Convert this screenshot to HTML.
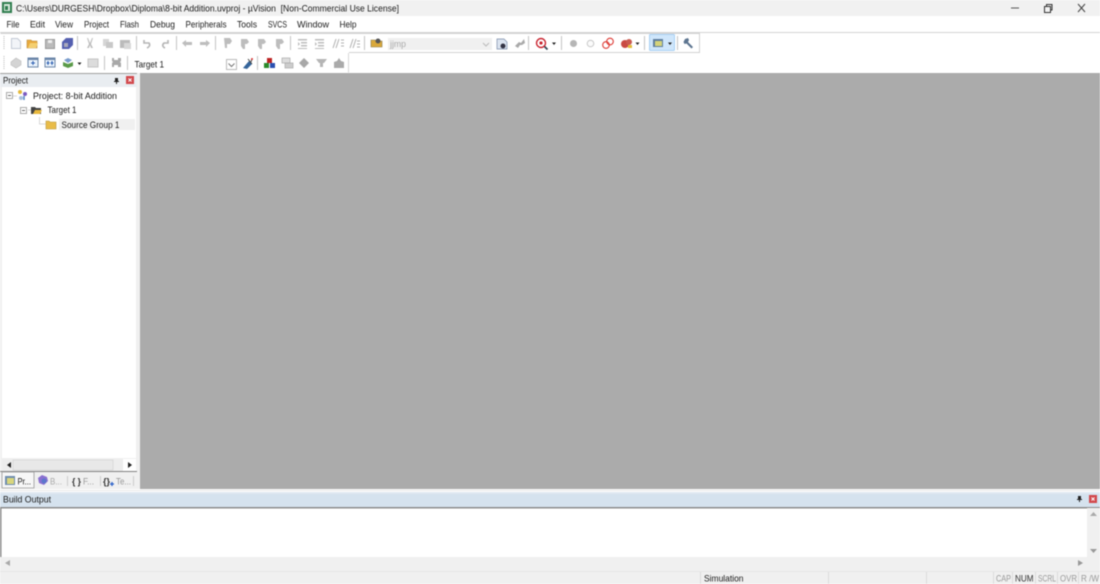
<!DOCTYPE html>
<html><head><meta charset="utf-8"><style>
html,body{margin:0;padding:0;width:1100px;height:584px;overflow:hidden;background:#fff}
svg{display:block;filter:blur(.5px)}
text{font-family:"Liberation Sans",sans-serif;font-size:9.5px;fill:#1a1a1a}
</style></head><body>
<svg width="1100" height="584" viewBox="0 0 1100 584" xmlns="http://www.w3.org/2000/svg">
<rect width="1100" height="584" fill="#fff"/>
<!-- title bar -->
<rect width="1100" height="16" fill="#f1f1f1"/>
<rect x="2" y="2" width="10" height="11" fill="#2f7d4f"/><rect x="4" y="4" width="6" height="7" fill="#d8e8dc"/><rect x="5" y="6" width="3" height="4" fill="#2f7d4f"/>
<text x="16" y="11.500" textLength="383" lengthAdjust="spacingAndGlyphs" xml:space="preserve">C:\Users\DURGESH\Dropbox\Diploma\8-bit Addition.uvproj - µVision  [Non-Commercial Use License]</text>
<path d="M1011 8h8" stroke="#555" stroke-width="1"/>
<rect x="1044.500" y="6.500" width="6" height="6" fill="none" stroke="#333"/><path d="M1046.500 6V4.500h5.500V10h-1.500" fill="none" stroke="#333"/>
<path d="M1078 4l7 8M1085 4l-7 8" stroke="#444" stroke-width="1"/>
<!-- menu -->
<text x="6.500" y="27.500" textLength="13" lengthAdjust="spacingAndGlyphs">File</text>
<text x="30" y="27.500" textLength="15" lengthAdjust="spacingAndGlyphs">Edit</text>
<text x="55" y="27.500" textLength="18" lengthAdjust="spacingAndGlyphs">View</text>
<text x="84" y="27.500" textLength="25" lengthAdjust="spacingAndGlyphs">Project</text>
<text x="120" y="27.500" textLength="19" lengthAdjust="spacingAndGlyphs">Flash</text>
<text x="150" y="27.500" textLength="25" lengthAdjust="spacingAndGlyphs">Debug</text>
<text x="185.500" y="27.500" textLength="41" lengthAdjust="spacingAndGlyphs">Peripherals</text>
<text x="237" y="27.500" textLength="20" lengthAdjust="spacingAndGlyphs">Tools</text>
<text x="268" y="27.500" textLength="19" lengthAdjust="spacingAndGlyphs">SVCS</text>
<text x="297" y="27.500" textLength="32" lengthAdjust="spacingAndGlyphs">Window</text>
<text x="339.500" y="27.500" textLength="17" lengthAdjust="spacingAndGlyphs">Help</text>
<rect y="32" width="1100" height="1" fill="#d4d4d4"/>
<!-- toolbars -->
<path d="M0.500 33.500H699.500V52.500H349" fill="#fff" stroke="#d2d2d2"/>
<rect x="0" y="53" width="349" height="20" fill="#fff"/>
<path d="M348.500 53V72.500" stroke="#d8d8d8"/>
<path d="M4 36v14M4 56v14" stroke="#bbb" stroke-dasharray="1 1"/>
<g fill="#c4c4c4">
<rect x="77" y="36" width="1" height="14"/><rect x="136" y="36" width="1" height="14"/><rect x="176" y="36" width="1" height="14"/><rect x="215" y="36" width="1" height="14"/><rect x="290" y="36" width="1" height="14"/><rect x="364" y="36" width="1" height="14"/><rect x="528" y="36" width="1" height="14"/><rect x="561" y="36" width="1" height="14"/><rect x="644" y="36" width="1" height="14"/><rect x="677" y="36" width="1" height="14"/>
<rect x="104" y="56" width="1" height="14"/><rect x="127" y="56" width="1" height="14"/><rect x="257" y="56" width="1" height="14"/>
</g>
<!-- row 1 icons -->
<path d="M11.500 38.500h6l3 3v7h-9z" fill="#f2f4f8" stroke="#c5cbd6"/>
<path d="M27 48v-8h4l1 1h5v7z" fill="#e8a93c" stroke="#b98a3a" stroke-width=".6"/><path d="M28 48l2-5h8l-2 5z" fill="#f4cf70"/>
<rect x="45.500" y="39.500" width="9" height="9" fill="#bbb" stroke="#999"/><rect x="48" y="40" width="4" height="3" fill="#eee"/>
<path d="M62 42l4-4h7v7l-4 4h-7z" fill="#5560b0"/><rect x="64" y="43" width="4" height="4" fill="#aab"/>
<path d="M88 38l2 5 2-5 1 0-2 6 2 4h-2l-1-3-1 3h-2l2-4-2-6z" fill="#bdbdbd"/>
<rect x="103" y="39" width="6" height="7" fill="#d6d6d6"/><rect x="106" y="42" width="7" height="6" fill="#c8c8c8"/>
<rect x="120" y="40" width="10" height="8" fill="#bbb"/><rect x="124" y="43" width="7" height="6" fill="#d8d8d8"/>
<g fill="none" stroke="#b5b5b5" stroke-width="1.600">
<path d="M144 40v3h5q2 3-2 5"/>
<path d="M168 40v3h-4q-3 3 1 5"/>
</g>
<g fill="#bdbdbd">
<path d="M182 43l4-3v2h6v3h-6v2z"/><path d="M210 43l-4-3v2h-6v3h6v2z"/>
<path d="M224 38h6l2 3-2 3h-3v4h-2z"/><path d="M241 39h6l2 3-2 2h-2v5h-2l-2-3z"/><path d="M258 39h6l2 3-2 2h-2v5h-2l-2-3z"/><path d="M276 39h6l2 3-2 2h-2v5h-2l-2-3z"/>
<path d="M298 39h9v1.500h-9zM301 42h6v1.500h-6zM301 45h6v1.500h-6zM298 48h9v1h-9zM298 42l2 2-2 2z"/>
<path d="M315 39h9v1.500h-9zM318 42h6v1.500h-6zM318 45h6v1.500h-6zM315 48h9v1h-9zM315 42l2 2-2 2z"/>
</g>
<g fill="none" stroke="#b0b0b0" stroke-width="1"><path d="M333 48l3-9M336 48l3-9M341 40h3M341 43h3M341 46h3"/><path d="M350 48l3-9M353 48l3-9M357 41h3M357 44h3M357 47h3"/></g>
<path d="M371 47v-7h4l1 1h6v6z" fill="#d9a83a" stroke="#8a7a4a" stroke-width=".6"/><circle cx="378" cy="41" r="2.500" fill="#555"/>
<rect x="388" y="38" width="104" height="12" fill="#f0f0f0"/>
<text x="390" y="47" textLength="16" lengthAdjust="spacingAndGlyphs" style="fill:#aaa">jjmp</text>
<path d="M483 43l3 3 3-3" fill="none" stroke="#bbb"/>
<path d="M497 39h7l3 3v7h-10z" fill="#dce4f0" stroke="#7a8ca8" stroke-width=".7"/><circle cx="503" cy="46" r="2.500" fill="#334"/>
<path d="M515 46l4-4 2 1 3-4 1 4-3 2-2 0-2 3z" fill="#aaa"/>
<circle cx="541" cy="43" r="4.500" fill="#fff" stroke="#c9232f" stroke-width="1.400"/><circle cx="541" cy="43" r="1.600" fill="#c9232f"/><path d="M544.500 46.500l3 3" stroke="#345" stroke-width="1.800"/>
<path d="M552 42.500h4l-2 2.500z" fill="#222"/>
<circle cx="573.500" cy="43.500" r="3.500" fill="#b5b5b5"/>
<circle cx="590.500" cy="43.500" r="3.300" fill="#fbfbfb" stroke="#c8c8c8"/>
<circle cx="606" cy="45" r="3.300" fill="none" stroke="#dd3b35" stroke-width="1.100"/><circle cx="610" cy="41.500" r="3.300" fill="none" stroke="#dd3b35" stroke-width="1.100"/>
<circle cx="625" cy="44" r="4" fill="#c94a43"/><circle cx="629" cy="42" r="3" fill="#c95a50"/><path d="M628 45h4v3h-4z" fill="#e3bd3a"/>
<path d="M635.500 42.500h4l-2 2.500z" fill="#222"/>
<rect x="649.500" y="34.500" width="25" height="16" rx="1" fill="#cfe6fb" stroke="#a9d1f5"/>
<rect x="653" y="39" width="10" height="8" fill="#5f7f9f"/><rect x="655" y="41" width="7" height="5" fill="#d5d37a"/>
<path d="M668 42.500h4l-2 2.500z" fill="#222"/>
<path d="M685 39l3-1 1 2-1 2 5 5-1.500 1.500-5-5-2 .5-1-2z" fill="#5d7590"/>
<!-- row 2 icons -->
<path d="M11 62l5-4 5 3v4l-5 3-5-3z" fill="#d4d4d4" stroke="#bbb" stroke-width=".6"/>
<rect x="28" y="58" width="10" height="9" fill="#eaf2fb" stroke="#6b86a8"/><rect x="28" y="58" width="10" height="2" fill="#6b86a8"/><path d="M33 61v4M31 63h4" stroke="#2a5db0"/>
<rect x="45" y="58" width="10" height="9" fill="#eaf2fb" stroke="#6b86a8"/><rect x="45" y="58" width="10" height="2" fill="#6b86a8"/><path d="M48 61v4M46.500 63h3M52 61v4M50.500 63h3" stroke="#2a5db0"/>
<path d="M63 62l5 2 5-2v4l-5 2-5-2z" fill="#5a9a48"/><path d="M64 60l4-2 4 2-4 3z" fill="#7a9ccc"/>
<path d="M77.500 62.500h4l-2 2.500z" fill="#222"/>
<rect x="88" y="59" width="10" height="8" fill="#dcdcdc" stroke="#c4c4c4"/>
<path d="M112 58h2v2h4v-2h3v3l-1 1 1 1v4h-3v-2h-4v2h-2v-4l1-1-1-1z" fill="#a8a8a8"/>
<!-- target combo -->
<text x="134.500" y="67.500" textLength="29.500" lengthAdjust="spacingAndGlyphs">Target 1</text>
<rect x="226.500" y="59.500" width="10" height="10" fill="#fff" stroke="#bbb"/><path d="M228.500 63.500l3 3 3-3" fill="none" stroke="#777"/>
<path d="M243 68l6-7 3 3-5 5z" fill="#34649a"/><path d="M248 59l4 5M252 59l-1 3" stroke="#444"/><circle cx="252" cy="59" r="1" fill="#d33"/>
<rect x="267" y="58" width="5" height="5" fill="#b22"/><rect x="264" y="63" width="5" height="5" fill="#2a8a2a"/><rect x="270" y="63" width="5" height="5" fill="#2a50b0"/>
<rect x="282" y="58" width="8" height="5" fill="#ddd" stroke="#aaa" stroke-width=".7"/><rect x="285" y="63" width="8" height="5" fill="#ccc" stroke="#aaa" stroke-width=".7"/>
<path d="M304 58l5 5-5 5-5-5z" fill="#a8a8a8"/>
<path d="M316 59h11l-3 4h-1v4h-3v-4h-1z" fill="#b5b5b5"/>
<path d="M334 68v-6l3-1 2-3 2 3 3 1v6z" fill="#aaa"/>
<rect y="73" width="1100" height="1" fill="#a0a0a0"/>
<!-- main -->
<rect x="137" y="73" width="3" height="416" fill="#f0f0f0"/>
<rect x="140" y="73" width="960" height="417" fill="#ababab"/>
<!-- project panel -->
<rect x="0" y="74" width="137" height="415" fill="#f0f0f0"/>
<rect x="0" y="74" width="137" height="13" fill="#e9edf1"/>
<text x="3" y="83.500" textLength="25" lengthAdjust="spacingAndGlyphs">Project</text>
<path d="M115 78h3v3h1v1h-2v2h-1v-2h-2v-1h1z" fill="#222"/>
<rect x="126" y="76" width="8" height="8" fill="#d2484c"/><path d="M128.500 78.500l3 3M131.500 78.500l-3 3" stroke="#fff"/>
<rect x="2" y="87" width="134" height="371" fill="#fff"/>
<path d="M13 96h4M28 110h3M39.500 117v7h6" fill="none" stroke="#d8d8d8"/>
<rect x="6.500" y="92.500" width="6" height="6" fill="#fff" stroke="#aaa"/><path d="M8 95.500h3" stroke="#666"/>
<circle cx="20" cy="92" r="2" fill="#e5b93a"/><circle cx="25" cy="94" r="2" fill="#7a5bc0"/><circle cx="21" cy="98" r="2" fill="#a9c0dc"/><path d="M24 96v4" stroke="#4a80c0" stroke-width="1.400"/>
<text x="33" y="99" textLength="84" lengthAdjust="spacingAndGlyphs">Project: 8-bit Addition</text>
<rect x="20.500" y="107.500" width="6" height="6" fill="#fff" stroke="#aaa"/><path d="M22 110.500h3" stroke="#666"/>
<path d="M31 114v-7h4l1 1h5v6z" fill="#444"/><path d="M33 114l2-4h7l-2 4z" fill="#e9b93e"/>
<text x="47.500" y="113.200" textLength="29" lengthAdjust="spacingAndGlyphs">Target 1</text>
<rect x="59" y="119" width="76" height="11" fill="#f0f0f0"/>
<path d="M46 129v-8h3l1 1h6v7z" fill="#e9bc48" stroke="#b8963c" stroke-width=".6"/>
<text x="61.500" y="127.800" textLength="58" lengthAdjust="spacingAndGlyphs">Source Group 1</text>
<!-- scrollbar -->
<rect x="2" y="459" width="134" height="12" fill="#ededed"/>
<rect x="13" y="460" width="100" height="10" fill="#e8e8e8" stroke="#cfcfcf" stroke-width=".6"/>
<rect x="123" y="459" width="13" height="12" fill="#fff"/>
<path d="M11 462v6l-4-3z" fill="#222"/><path d="M128 462v6l4-3z" fill="#222"/>
<rect y="471" width="137" height="1" fill="#808080"/>
<!-- tabs -->
<path d="M2 472h32v16H2z" fill="#f7f7f7" stroke="#999" stroke-width=".8"/>
<rect x="5" y="476" width="10" height="9" fill="#6f8dae"/><rect x="7" y="478" width="7" height="6" fill="#d9d67c"/>
<text x="17.500" y="484.500" textLength="13.500" lengthAdjust="spacingAndGlyphs">Pr...</text>
<path d="M42 475l5 2 1 4-4 4-5-2-1-5z" fill="#8a70d0"/><circle cx="44" cy="481" r="2.500" fill="#5b77cc"/>
<text x="50" y="484.500" textLength="12" lengthAdjust="spacingAndGlyphs" style="fill:#aaa">B...</text>
<rect x="67" y="476" width="1" height="10" fill="#ccc"/>
<text x="72" y="484.500" textLength="9" lengthAdjust="spacingAndGlyphs" style="fill:#333;font-weight:bold">{ }</text>
<text x="83" y="484.500" textLength="11" lengthAdjust="spacingAndGlyphs" style="fill:#999">F...</text>
<rect x="100" y="476" width="1" height="10" fill="#ccc"/>
<text x="103" y="484.500" textLength="7" lengthAdjust="spacingAndGlyphs" style="fill:#333;font-weight:bold">{}</text>
<path d="M110 484h4M112 482v4" stroke="#2a60c8" stroke-width="1.300"/>
<text x="116" y="484.500" textLength="15" lengthAdjust="spacingAndGlyphs" style="fill:#999">Te...</text>
<rect x="133" y="476" width="1" height="10" fill="#ccc"/>
<!-- build output -->
<rect y="489" width="1100" height="3" fill="#fff"/>
<rect y="490" width="1100" height="1" fill="#e8e8e8"/>
<rect y="492" width="1100" height="15" fill="#d5e2ee"/>
<rect y="492" width="1100" height="2" fill="#dfe8f1"/>
<text x="3" y="502.500" textLength="48" lengthAdjust="spacingAndGlyphs">Build Output</text>
<path d="M1078 496h3v3h1v1h-2v2h-1v-2h-2v-1h1z" fill="#222"/>
<rect x="1089" y="495" width="8" height="8" fill="#d2484c"/><path d="M1091.500 497.500l3 3M1094.500 497.500l-3 3" stroke="#fff"/>
<rect y="507" width="1100" height="1.500" fill="#8c8c8c"/>
<rect x="0" y="507" width="1.500" height="50" fill="#8c8c8c"/>
<rect x="1.500" y="508.500" width="1085" height="49" fill="#fff"/>
<rect x="1087" y="508" width="13" height="49" fill="#f0f0f0"/>
<path d="M1090 516h7l-3.500-4z" fill="#aaa"/><path d="M1090 549h7l-3.500 4z" fill="#999"/>
<rect y="557" width="1100" height="14" fill="#f0f0f0"/>
<path d="M10 560v6l-5-3z" fill="#aaa"/><path d="M1078 560v6l5-3z" fill="#999"/>
<!-- status -->
<rect y="571" width="1100" height="13" fill="#f0f0f0"/>
<rect y="571" width="1100" height="1" fill="#e6e6e6"/>
<g fill="#dcdcdc"><rect x="700" y="572" width="1" height="12"/><rect x="828" y="572" width="1" height="12"/><rect x="926" y="572" width="1" height="12"/><rect x="993" y="572" width="1" height="12"/><rect x="1012" y="572" width="1" height="12"/><rect x="1035" y="572" width="1" height="12"/><rect x="1057" y="572" width="1" height="12"/><rect x="1078" y="572" width="1" height="12"/></g>
<text x="704" y="581.500" textLength="39.500" lengthAdjust="spacingAndGlyphs">Simulation</text>
<text x="996" y="581.500" textLength="15" lengthAdjust="spacingAndGlyphs" style="fill:#999">CAP</text>
<text x="1015" y="581.500" textLength="18.500" lengthAdjust="spacingAndGlyphs" style="fill:#333">NUM</text>
<text x="1038" y="581.500" textLength="18" lengthAdjust="spacingAndGlyphs" style="fill:#999">SCRL</text>
<text x="1060" y="581.500" textLength="17" lengthAdjust="spacingAndGlyphs" style="fill:#999">OVR</text>
<text x="1081" y="581.500" textLength="18" lengthAdjust="spacingAndGlyphs" style="fill:#999">R /W</text>
</svg>
</body></html>
